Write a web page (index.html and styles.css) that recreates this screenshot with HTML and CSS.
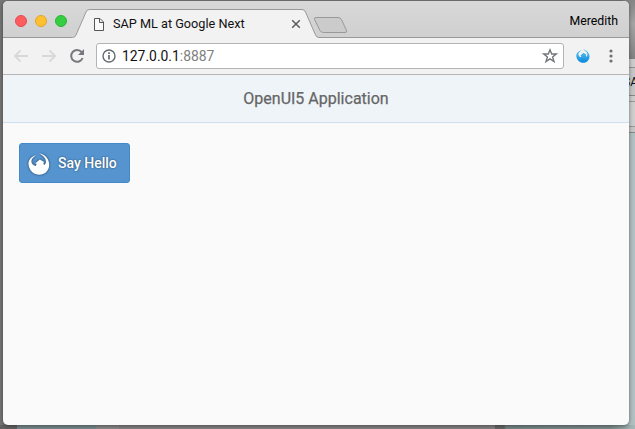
FILE: index.html
```html
<!DOCTYPE html>
<html lang="en">
<head>
<meta charset="utf-8">
<title>SAP ML at Google Next</title>
<link rel="stylesheet" href="styles.css">
</head>
<body>
<div class="desktop">
  <div class="backdrop">
    <div class="behind">
      <div class="behind-top"></div>
      <div class="behind-tab"></div>
      <div class="behind-bar">SA</div>
      <div class="behind-gap"></div>
      <div class="behind-field"></div>
      <div class="behind-line"></div>
      <div class="behind-page"></div>
    </div>
    <div class="below"></div>
  </div>
  <main class="window">
    <header class="tabstrip">
      <svg class="tab-shape" width="626" height="37" viewBox="3 1 626 37">
        <path d="M3 37.500H72.500Q75 37.500 76 35L86 12Q87 9.500 89.500 9.500H302Q304.500 9.500 305.500 12L315.500 35Q316.500 37.500 319 37.500H629V39H3Z" fill="#f2f2f2" stroke="#999" />
        <path d="M316 17.500H338Q340.500 17.500 341.500 19.500L346.500 30.500Q347.500 32.500 345 32.500H323.500Q321 32.500 320 30.500L314.500 19.500Q314 17.500 316 17.500Z" fill="#cbcbcb" stroke="#999"/>
      </svg>
      <div class="lights"><i class="red"></i><i class="yellow"></i><i class="green"></i></div>
      <svg class="page-icon" width="12" height="15" viewBox="0 0 12 15"><path d="M1.500 1.500H7L10.500 5V13.500H1.500ZM6.500 1.500V5.500H10.500" fill="#fafafa" stroke="#555"/></svg>
      <span class="tab-title">SAP ML at Google Next</span>
      <svg class="close" width="10" height="10" viewBox="0 0 10 10"><path d="M1.200 1.200L8.800 8.800M8.800 1.200L1.200 8.800" stroke="#5a5a5a" stroke-width="1.500"/></svg>
      <span class="profile">Meredith</span>
    </header>
    <div class="toolbar">
      <svg class="nav" width="86" height="18" viewBox="10 47 86 18" fill="none">
        <path d="M28 56H15.500M20.500 50.500L15 56L20.500 61.500M42 56H54.500M49.500 50.500L55 56L49.500 61.500" stroke="#d7d8da" stroke-width="1.900"/>
        <path d="M81.700 52.200A5.900 5.900 0 1 0 82.600 58" stroke="#77797c" stroke-width="2"/>
        <path d="M84 49V55H78Z" fill="#77797c"/>
      </svg>
      <div class="address">
        <svg width="14" height="14" viewBox="0 0 14 14"><circle cx="7" cy="7" r="6" fill="none" stroke="#66696d" stroke-width="1.400"/><path d="M7 6V10.500M7 3.200V4.900" stroke="#66696d" stroke-width="1.700"/></svg>
        <span class="url">127.0.0.1<span class="port">:8887</span></span>
        <svg class="star" width="16" height="16" viewBox="0 0 16 16"><path d="M8 1.800L9.700 6H14.200L10.600 8.900L12 13.500L8 10.800L4 13.500L5.400 8.900L1.800 6H6.300Z" fill="none" stroke="#75777c" stroke-width="1.400"/></svg>
      </div>
      <svg class="ext" width="14" height="14" viewBox="0 0 22 22">
        <defs><linearGradient id="blue" x2="0" y2="1"><stop stop-color="#6bcdf3"/><stop offset="1" stop-color="#0586dc"/></linearGradient></defs>
        <path d="M9 2.500C4 2.500 .200 6.500 .500 11.500C1.200 18 6 21.700 11.200 21.700C17.500 21.700 21.500 17 21.200 11C20.800 5 16.500 1 10.500 .200C14 2 17.500 4.500 17.800 7.500C18.100 10 17.500 11.300 16 12L15.500 9.600L16.800 9L11.800 6L6.500 10.500L8.500 10.800L7.500 13C5 12.400 3.700 10.500 3.800 8C4 5.500 6 3.800 9 2.500Z" fill="url(#blue)"/>
      </svg>
      <svg class="menu" width="4" height="14" viewBox="0 0 4 14" fill="#707176"><circle cx="2" cy="2" r="1.600"/><circle cx="2" cy="7" r="1.600"/><circle cx="2" cy="12" r="1.600"/></svg>
    </div>
    <h1 class="app-header">OpenUI5 Application</h1>
    <section class="content">
      <button class="hello">
        <svg width="22" height="22" viewBox="0 0 22 22"><path d="M8 2.500C3.500 3 .200 7 .500 11.500C1.200 18 6 21.700 11.200 21.700C17.500 21.700 21.500 17 21.200 11C20.800 5 16.500 1 11 .200C14.500 2 17.500 4.500 17.800 7.500C18.100 10 17.500 11.300 16 12L15.300 9.800L16.500 9.300L11.800 6.500L7 10.500L8.700 10.800L7.700 13C5 12.400 3.400 10.500 3.400 8.200C3.400 5.700 5.500 3.800 8 2.500Z" fill="#fff"/></svg>
        <span>Say Hello</span>
      </button>
    </section>
  </main>
</div>
</body>
</html>
```
FILE: styles.css
```css
* { box-sizing: border-box; }
body { margin: 0; font-family: Roboto, "Liberation Sans", sans-serif; }
.desktop { position: relative; width: 635px; height: 429px; padding: 1px 6px 4px 3px; overflow: hidden; background: #777; }
.backdrop { position: absolute; inset: 0; display: flex; flex-direction: column; }
.behind { height: 425px; width: 12px; margin-left: auto; display: flex; flex-direction: column; }
.behind > div { flex: none; }
.behind-top { height: 59px; background: linear-gradient(#858585, #a5a5a5 40%, #828282); }
.behind-tab { height: 9px; background: #ccc; border-bottom: 1px solid #929292; }
.behind-bar { height: 28px; background: #c6c6c6; border-bottom: 1px solid #888; font-size: 12px; line-height: 28px; color: #111; }
.behind-gap { height: 5px; background: #ccc; }
.behind-field { height: 26px; border-top: 1px solid #999; border-bottom: 1px solid #999; background: #cecece; }
.behind-line { height: 5px; background: #c6c6c6; }
.behind > .behind-page { flex: 1; background: #b1c0c1; border-top: 1px solid #888; }
.below { height: 4px; background: linear-gradient(90deg, #626262 17px, #78898b 17px 96px, #8b8a8b 96px 119px, #858384 119px 495px, #666 495px 504px, #778686 506px, #7d8c8c 610px, #a7b8b8 635px); }
.window { position: relative; height: 424px; display: flex; flex-direction: column; overflow: hidden; border-radius: 5px; background: #fafafa; box-shadow: 0 1px 4px rgba(0,0,0,.45); }
.tabstrip { position: relative; height: 37px; flex: none; display: flex; align-items: center; padding: 2px 11px 0 12px; background: linear-gradient(#d8d8d8, #d0d0d0); }
.tab-shape { position: absolute; left: 0; top: 0; }
.tabstrip > :not(.tab-shape) { position: relative; }
.lights { display: flex; gap: 8px; width: 78px; }
.lights i { width: 12px; height: 12px; border-radius: 50%; border: 1px solid; }
.red { background: #ff5c60; border-color: #e24b50 !important; }
.yellow { background: #ffc130; border-color: #e0a52b !important; }
.green { background: #34ce41; border-color: #29b438 !important; }
.page-icon { align-self: flex-start; margin-top: 14px; }
.tab-title { margin-left: 8px; width: 178px; font-size: 12.700px; line-height: 18px; margin-top: 6px; white-space: nowrap; color: #111; }
.close { margin-top: 6px; }
.profile { margin-left: auto; font-size: 12.300px; line-height: 18px; }
.toolbar { height: 37px; flex: none; display: flex; align-items: center; padding: 0 16px 1px 7px; background: #f2f2f2; border-bottom: 1px solid #b6b6b6; }
.address { width: 468px; height: 26px; display: flex; align-items: center; padding: 0 5px; background: #fff; border: 1px solid #b4b4b4; border-radius: 3px; }
.url { margin-left: 6px; padding-top: 1px; font-size: 13.900px; line-height: 20px; color: #111; }
.port { color: #808080; }
.star { margin-left: auto; }
.ext { margin-left: 12px; }
.menu { margin-left: auto; }
.app-header { height: 48px; flex: none; margin: 0; background: #eff4f9; border-bottom: 1px solid #cfdfee; font-size: 16px; font-weight: 400; line-height: 48px; text-align: center; color: #666; -webkit-text-stroke: .25px #666; }
.content { padding: 20px 16px; }
.hello { width: 111px; height: 40px; display: flex; align-items: center; padding: 0 0 0 8px; gap: 8px; background: #5594cf; border: 1px solid #4289ca; border-radius: 3px; color: #fff; font: 500 14px Roboto, sans-serif; white-space: nowrap; text-shadow: 0 0 2px rgba(0,0,0,.6); }
.hello svg { position: relative; top: .5px; filter: drop-shadow(0 0 1px rgba(0,0,0,.65)); }
```
